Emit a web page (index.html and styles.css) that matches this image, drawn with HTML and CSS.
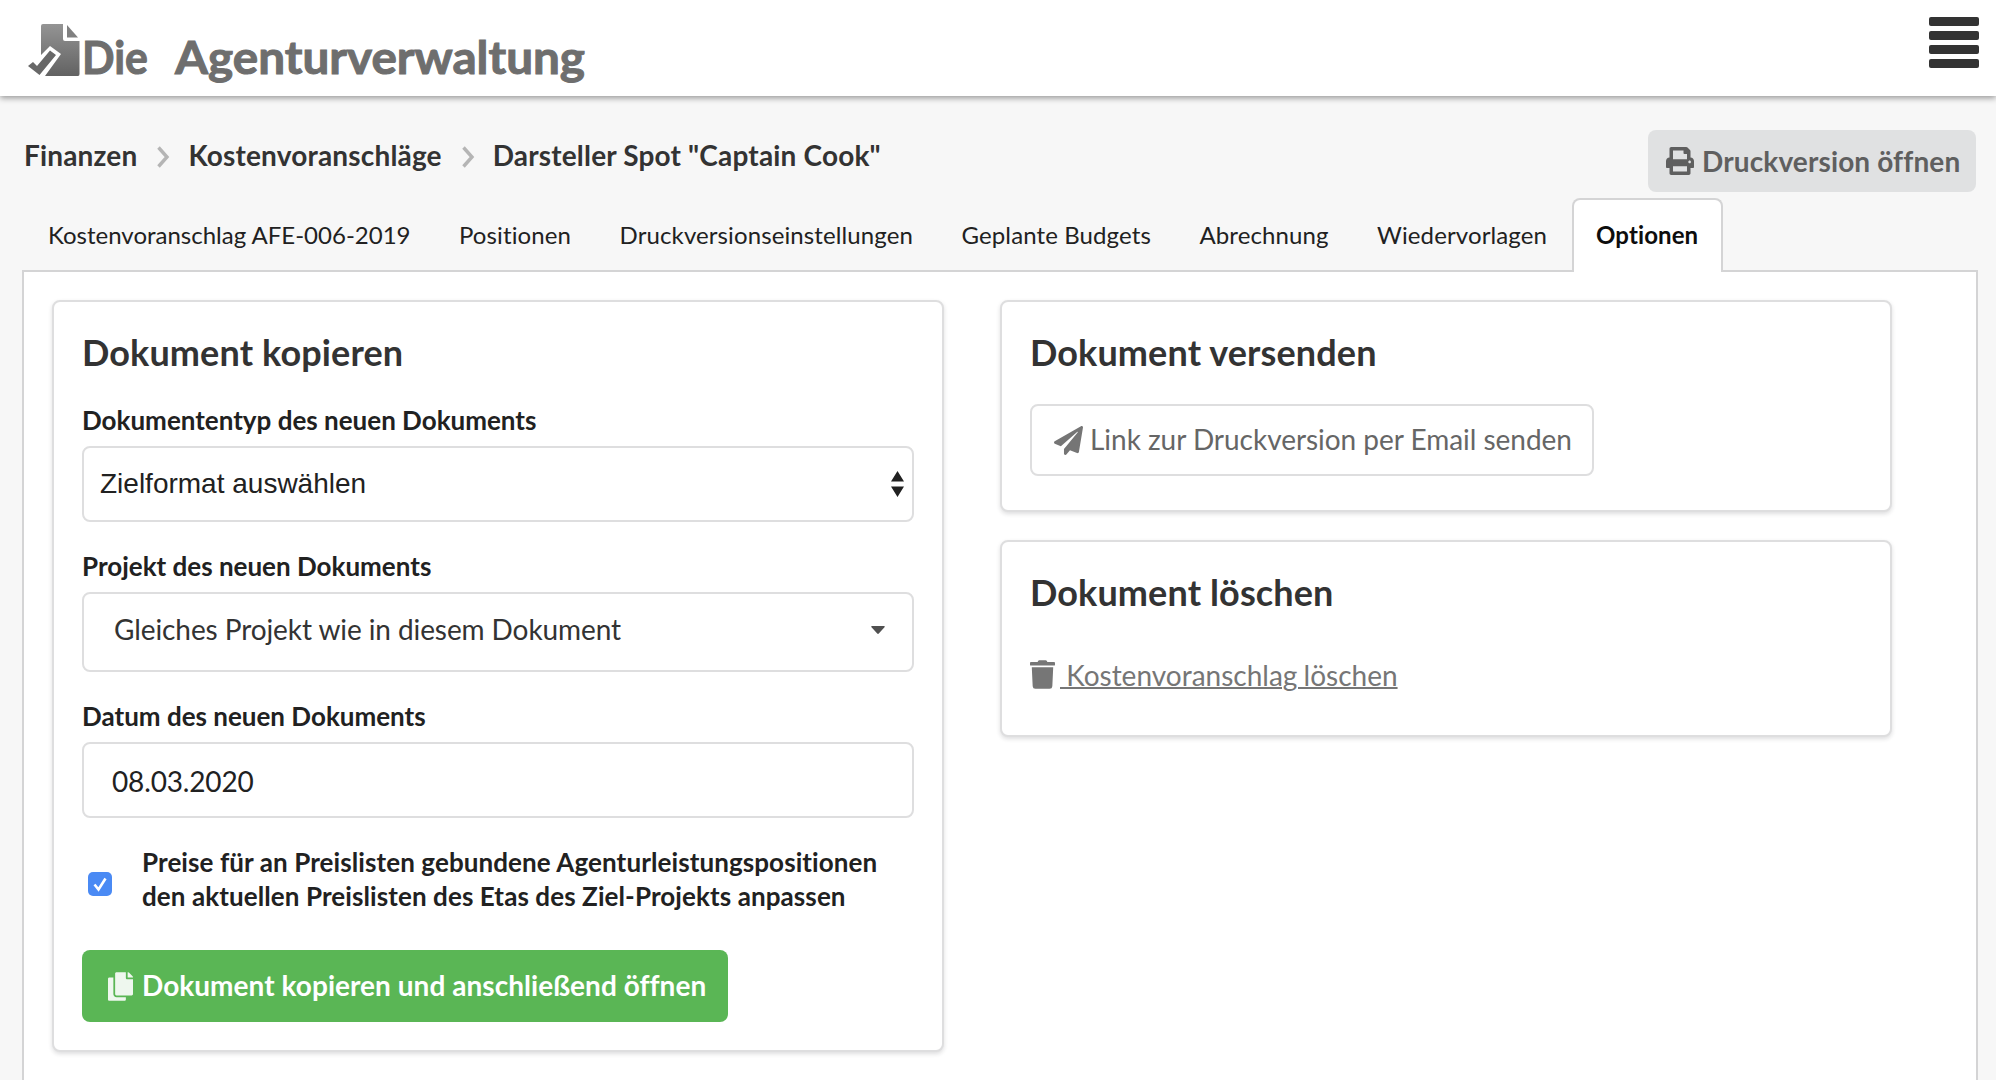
FILE: index.html
```
<!DOCTYPE html>
<html lang="de">
<head>
<meta charset="utf-8">
<title>Die Agenturverwaltung</title>
<link rel="stylesheet" href="styles.css">
</head>
<body>
<header class="topbar">
  <svg class="logo" width="570" height="72" viewBox="20 20 570 72" role="img" aria-label="Die Agenturverwaltung">
    <defs>
      <linearGradient id="sheet" x1="0" y1="0" x2="0" y2="1"><stop offset="0" stop-color="#949494"/><stop offset="1" stop-color="#626262"/></linearGradient>
    </defs>
    <path d="M43 24H63V39Q63 41 65 41H79.5V74Q79.5 76 78 76H45L61 54L50 46L41 55V26Q41 24 43 24Z" fill="url(#sheet)"/>
    <path d="M67 25L78 37.5H67Z" fill="#808080"/>
    <path d="M28 66L33 62L37 66L50 50.500L56 55L39.500 75Z" fill="#686868"/>
    <g class="logo-text">
      <text x="82" y="74" textLength="66" lengthAdjust="spacingAndGlyphs">Die</text>
      <text x="175" y="74" textLength="410" lengthAdjust="spacingAndGlyphs">Agenturverwaltung</text>
    </g>
  </svg>
  <button class="menu" aria-label="Menü"><span></span><span></span><span></span><span></span></button>
</header>

<div class="subhead">
  <nav class="crumbs">
    <a>Finanzen</a>
    <svg class="chevron" viewBox="0 0 14 22"><path d="M2.500 1.500L11 11L2.500 20.500"/></svg>
    <a>Kostenvoranschläge</a>
    <svg class="chevron" viewBox="0 0 14 22"><path d="M2.500 1.500L11 11L2.500 20.500"/></svg>
    <a>Darsteller Spot "Captain Cook"</a>
  </nav>
  <a class="print"><svg class="icon" viewBox="0 0 512 512"><path d="M448 192V77.250c0-8.490-3.370-16.620-9.370-22.630L393.370 9.370c-6-6-14.140-9.370-22.630-9.370H96C78.330 0 64 14.330 64 32v160c-35.350 0-64 28.650-64 64v112c0 8.840 7.160 16 16 16h48v96c0 17.670 14.330 32 32 32h320c17.670 0 32-14.330 32-32v-96h48c8.840 0 16-7.160 16-16V256c0-35.350-28.650-64-64-64zm-64 256H128v-96h256v96zm0-224H128V64h192v48c0 8.840 7.160 16 16 16h48v96zm48 72c-13.250 0-24-10.750-24-24 0-13.260 10.750-24 24-24s24 10.740 24 24c0 13.250-10.750 24-24 24z"/></svg><span>Druckversion öffnen</span></a>
</div>

<nav class="tabs">
  <a class="tab">Kostenvoranschlag AFE-006-2019</a>
  <a class="tab">Positionen</a>
  <a class="tab">Druckversionseinstellungen</a>
  <a class="tab">Geplante Budgets</a>
  <a class="tab">Abrechnung</a>
  <a class="tab">Wiedervorlagen</a>
  <a class="tab active">Optionen</a>
</nav>

<main class="panel">
  <section class="card copy">
    <h2>Dokument kopieren</h2>
    <label class="label">Dokumententyp des neuen Dokuments</label>
    <div class="field select"><span>Zielformat auswählen</span>
      <svg width="13" height="26" viewBox="0 0 13 26"><path d="M6.500 0L13 10.500H0ZM0 15.500H13L6.500 26Z"/></svg></div>
    <label class="label">Projekt des neuen Dokuments</label>
    <div class="field dropdown"><span>Gleiches Projekt wie in diesem Dokument</span>
      <svg width="14" height="8" viewBox="0 0 14 8"><path d="M1 0H13Q14.500 0 13.500 1.200L8 7.300Q7 8.500 6 7.300L.5 1.200Q-.5 0 1 0Z"/></svg></div>
    <label class="label">Datum des neuen Dokuments</label>
    <div class="field date"><span>08.03.2020</span></div>
    <div class="check">
      <span class="box"><svg viewBox="0 0 24 24"><path d="M6.500 12.500L10.500 17.500L17.500 6.500"/></svg></span>
      <div class="check-text">Preise für an Preislisten gebundene Agenturleistungspositionen<br>den aktuellen Preislisten des Etas des Ziel-Projekts anpassen</div>
    </div>
    <button class="submit"><svg class="icon" viewBox="0 0 448 512"><path d="M320 448v40c0 13.255-10.745 24-24 24H24c-13.255 0-24-10.745-24-24V120c0-13.255 10.745-24 24-24h72v296c0 30.879 25.121 56 56 56h168zm0-344V0H152c-13.255 0-24 10.745-24 24v368c0 13.255 10.745 24 24 24h272c13.255 0 24-10.745 24-24V128H344c-13.200 0-24-10.800-24-24zm120.971-31.029L375.029 7.029A24 24 0 0 0 358.059 0H352v96h96v-6.059a24 24 0 0 0-7.029-16.970z"/></svg><span>Dokument kopieren und anschließend öffnen</span></button>
  </section>
  <div class="side">
    <section class="card send">
      <h2>Dokument versenden</h2>
      <button class="mail"><svg class="icon" viewBox="0 0 512 512"><path d="M476 3.200L12.500 270.600c-18.100 10.400-15.800 35.600 2.200 43.200L121 358.400l287.300-253.200c5.500-4.900 13.300 2.600 8.600 8.300L176 407v80.500c0 23.600 28.500 32.900 42.500 15.800L282 426l124.600 52.200c14.200 6 30.400-2.900 33-18.200l72-432C515 7.800 493.300-6.800 476 3.200z"/></svg><span>Link zur Druckversion per Email senden</span></button>
    </section>
    <section class="card remove">
      <h2>Dokument löschen</h2>
      <a class="delete"><svg class="icon" viewBox="0 0 448 512"><path d="M432 32H312l-9.400-18.700A24 24 0 0 0 281.100 0H166.800a23.720 23.720 0 0 0-21.400 13.300L136 32H16A16 16 0 0 0 0 48v32a16 16 0 0 0 16 16h416a16 16 0 0 0 16-16V48a16 16 0 0 0-16-16zM32 128l16 339a48 48 0 0 0 48 45h256a48 48 0 0 0 48-45L416 128z"/></svg><span>&nbsp;Kostenvoranschlag löschen</span></a>
    </section>
  </div>
</main>
</body>
</html>
```
FILE: styles.css
```
* { box-sizing: border-box; }
html { height: 100%; overflow: hidden; }
body {
  margin: 0;
  height: 1080px;
  overflow: hidden;
  display: flex;
  flex-direction: column;
  background: #f7f7f7;
  color: #212121;
  font: 28px/40px Lato, "Liberation Sans", sans-serif;
  white-space: nowrap;
}
button { font: inherit; margin: 0; padding: 0; border: 0; background: none; }
h2 { margin: 0; font-size: 36px; line-height: 46px; font-weight: 700; letter-spacing: .12px; color: #333; }
.icon { display: block; flex: none; fill: currentColor; }

.topbar {
  flex: none;
  height: 96px;
  padding: 17px 17px 0 20px;
  display: flex;
  justify-content: space-between;
  align-items: flex-start;
  background: #fff;
  box-shadow: 0 2px 6px rgba(0, 0, 0, .4);
}
.logo { margin-top: 3px; }
.logo-text { font: 700 46px Lato, sans-serif; fill: #6e6e6e; stroke: #6e6e6e; stroke-width: 1; }
.menu { width: 50px; display: grid; gap: 5px; }
.menu span { height: 9px; border-radius: 2px; background: #333; }

.subhead {
  flex: none;
  height: 102px;
  padding: 34px 20px 0 24px;
  display: flex;
  justify-content: space-between;
  align-items: flex-start;
}
.crumbs { display: flex; padding-top: 5px; font-weight: 700; letter-spacing: .17px; color: #333; }
.chevron { width: 14px; height: 22px; margin: 11px 18px 0 19px; fill: none; stroke: #b5b5b5; stroke-width: 3.4; }
.print {
  width: 328px;
  height: 62px;
  padding-left: 18px;
  display: flex;
  align-items: center;
  gap: 8px;
  border-radius: 8px;
  background: #e0e1e2;
  color: #5f5f5f;
  font-weight: 700;
  letter-spacing: .13px;
}
.print .icon { width: 28px; height: 28px; }

.tabs { flex: none; display: flex; height: 72px; padding-left: 24px; position: relative; z-index: 1; }
.tab { padding: 19px 24.5px 0 24px; font-size: 24px; line-height: 36px; letter-spacing: .11px; }
.tab:first-child { letter-spacing: 0; }
.tab.active {
  height: 74px;
  padding: 17px 23px 0 22.5px;
  border: 2px solid #d4d4d5;
  border-bottom: 0;
  border-radius: 8px 8px 0 0;
  background: #fff;
  color: #0d0d0d;
  font-weight: 700;
}

.panel {
  flex: none;
  height: 830px;
  margin: 0 18px 0 22px;
  padding: 28px 0 0 28px;
  display: flex;
  align-items: flex-start;
  gap: 56px;
  border: 2px solid #d4d4d5;
  background: #fff;
}
.card {
  width: 892px;
  padding: 27px 28px 28px;
  border: 2px solid #dededf;
  border-radius: 8px;
  background: #fff;
  box-shadow: 0 2px 4px rgba(34, 36, 38, .15);
}
.side { display: grid; gap: 28px; }
.send { height: 212px; }
.remove { height: 197px; }

.label { display: block; margin-top: 27px; font-size: 26px; line-height: 34px; font-weight: 700; }
h2 + .label { margin-top: 28px; }
.field {
  display: flex;
  justify-content: space-between;
  height: 76px;
  margin-top: 9px;
  border: 2px solid #dededf;
  border-radius: 8px;
}
.select { padding: 0 8px 0 16px; align-items: center; font-family: "Liberation Sans", sans-serif; }
.select svg { fill: #212121; }
.dropdown { height: 80px; padding: 15px 27px 0 30px; letter-spacing: -.09px; color: #333; }
.dropdown svg { margin-top: 17px; fill: #505050; }
.date { padding: 17px 28px 0; letter-spacing: -.15px; }

.check { display: flex; align-items: center; gap: 30px; margin-top: 27px; padding-left: 6px; }
.box { width: 24px; height: 24px; margin-top: 10px; border-radius: 5px; background: #4a8af4; }
.box svg { display: block; fill: none; stroke: #fff; stroke-width: 2.600; }
.check-text { font-size: 26px; line-height: 34px; font-weight: 700; letter-spacing: .09px; }

.submit {
  display: flex;
  align-items: center;
  width: 646px;
  height: 72px;
  margin-top: 37px;
  padding-left: 26px;
  gap: 9px;
  border-radius: 8px;
  background: #5ab655;
  color: #fff;
  font-weight: 700;
  letter-spacing: .04px;
}
.submit span, .mail span { margin-top: -2px; }
.submit .icon { width: 25px; height: 29px; opacity: .9; }
.mail {
  display: flex;
  align-items: center;
  width: 564px;
  height: 72px;
  margin-top: 29px;
  padding-left: 22px;
  gap: 7px;
  border: 2px solid #dededf;
  border-radius: 8px;
  letter-spacing: -.03px;
  color: #666;
}
.mail .icon { width: 29px; height: 29px; fill: #757575; }
.delete { display: flex; margin-top: 40px; gap: 5px; color: #767676; }
.delete .icon { width: 25px; height: 29px; margin-top: 5px; }
.delete span { word-spacing: -1px; text-decoration: underline; text-decoration-thickness: 2px; }
```
